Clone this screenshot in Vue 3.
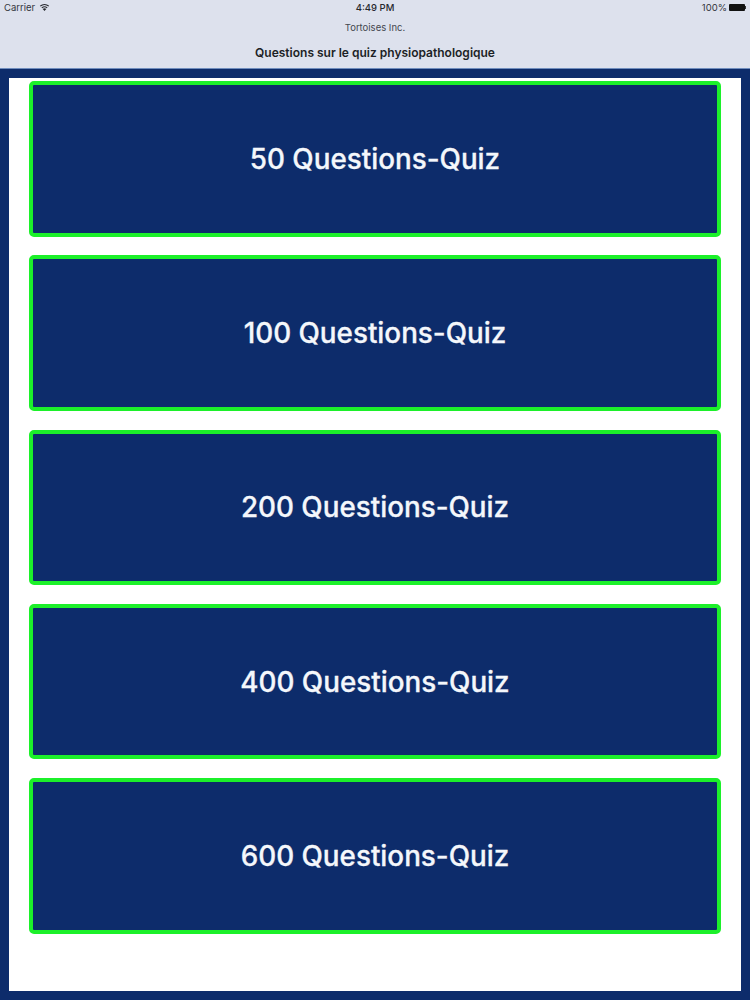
<template>
  <div class="screen">
    <header class="nav">
      <div class="status">
        <div class="status-left">
          <span>Carrier</span>
          <svg class="wifi" width="11" height="8" viewBox="0 0 22 16">
            <path d="M11 16 L7.4 11.9 A5.4 5.4 0 0 1 14.6 11.9 Z" fill="#26282e" />
            <path d="M5.6 9.9 A8.2 8.2 0 0 1 16.4 9.9" fill="none" stroke="#26282e" stroke-width="2.2" />
            <path d="M2.4 6.4 A13 13 0 0 1 19.6 6.4" fill="none" stroke="#26282e" stroke-width="2.2" />
          </svg>
        </div>
        <span class="time">4:49 PM</span>
        <div class="status-right">
          <span>100%</span>
          <span class="battery"></span>
          <span class="battery-tip"></span>
        </div>
      </div>
      <div class="company">Tortoises Inc.</div>
      <h1 class="title">Questions sur le quiz physiopathologique</h1>
    </header>

    <main class="frame">
      <div class="sheet">
        <button v-for="quiz in quizzes" :key="quiz" class="quiz-btn">{{ quiz }} Questions-Quiz</button>
      </div>
    </main>
  </div>
</template>

<script setup>
const quizzes = [50, 100, 200, 400, 600];
</script>

<style>
html,
body {
  margin: 0;
  background: #0d2c6b;
}
</style>

<style scoped>
.screen {
  width: 750px;
  height: 1000px;
  display: flex;
  flex-direction: column;
  font-family: Inter, "Liberation Sans", sans-serif;
  overflow: hidden;
}

/* barre du haut */
.nav {
  height: 69px;
  flex-shrink: 0;
  box-sizing: border-box;
  background: #dde1ed;
  border-bottom: 1px solid #6f8dbd;
  color: #26282e;
}

.status {
  height: 14px;
  padding: 0 4px;
  display: flex;
  justify-content: space-between;
  align-items: center;
  position: relative;
  font-size: 9.5px;
  color: #33363d;
}

.status-left,
.status-right {
  display: flex;
  align-items: center;
}

.wifi {
  margin-left: 4px;
}

.time {
  position: absolute;
  left: 0;
  right: 0;
  text-align: center;
  font-weight: 500;
  color: #26282e;
}

.battery {
  width: 16px;
  height: 7px;
  margin-left: 2px;
  background: #111;
  border-radius: 1px;
}

.battery-tip {
  width: 1px;
  height: 3px;
  background: #333;
}

.company {
  margin-top: 7px;
  height: 14px;
  line-height: 14px;
  text-align: center;
  font-size: 9.5px;
  color: #44474f;
}

.title {
  margin: 10px 0 0;
  line-height: 16px;
  text-align: center;
  font-size: 12px;
  font-weight: 600;
  color: #1c1f26;
}

/* contenu */
.frame {
  flex: 1;
  padding: 9px;
  display: flex;
  background: #0d2c6b;
}

.sheet {
  flex: 1;
  background: #fff;
  padding: 3px 20px 0;
  display: flex;
  flex-direction: column;
  gap: 18.8px;
}

.quiz-btn {
  height: 155.5px;
  flex-shrink: 0;
  box-sizing: border-box;
  padding: 0;
  border: 4px solid #1cf02a;
  border-radius: 5px;
  background: #0d2c6b;
  color: #f4f7fb;
  font-family: inherit;
  font-size: 27.8px;
  font-weight: 500;
  -webkit-text-stroke: 0.3px #f4f7fb;
}
</style>
